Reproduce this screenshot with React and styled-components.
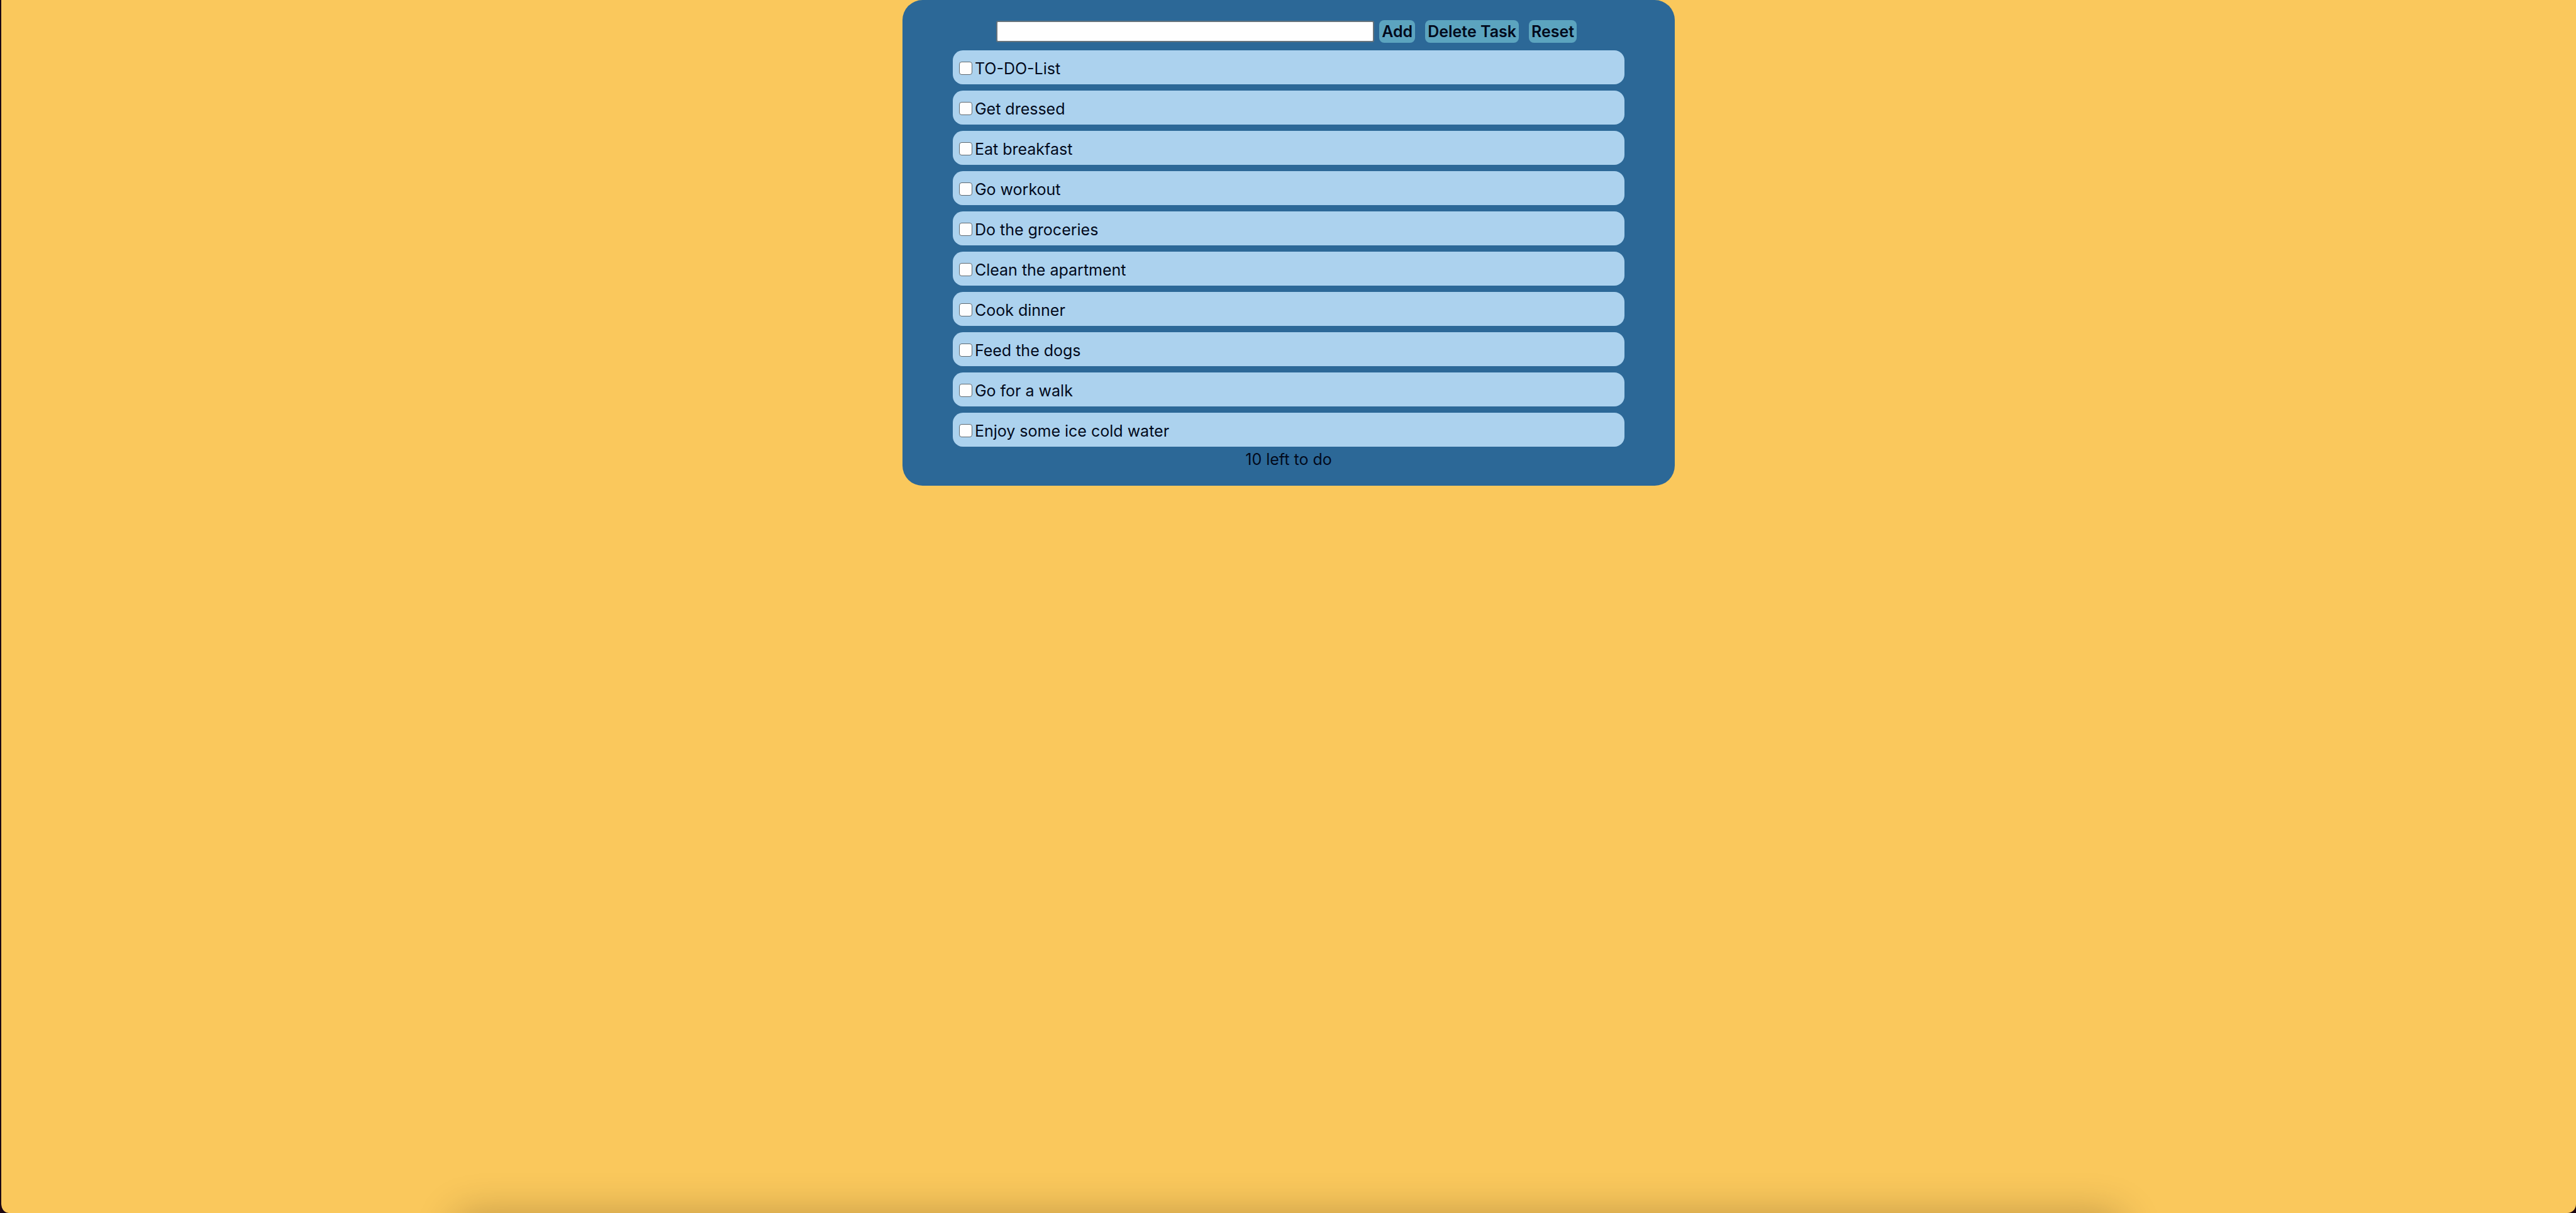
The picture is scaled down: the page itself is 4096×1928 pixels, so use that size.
import React, { useState } from "react";
import styled, { createGlobalStyle } from "styled-components";

const GlobalStyle = createGlobalStyle`
  * { box-sizing: border-box; }
  html, body { margin: 0; background: #1c0612; }
  body {
    font-family: Inter, "Liberation Sans", sans-serif;
    font-size: 25px;
    line-height: 32px;
    color: #020a1c;
  }
`;

const Page = styled.main`
  position: relative;
  display: flex;
  justify-content: center;
  align-items: flex-start;
  min-height: 100vh;
  border-left: 2px solid #1c0612;
  background: #fac85c;
  background-clip: padding-box;
  border-radius: 0 0 14px 14px;
  overflow: hidden;
`;

const DockShadow = styled.div`
  position: absolute;
  left: 17.6%;
  right: 17.6%;
  bottom: -200px;
  height: 200px;
  border-radius: 24px;
  box-shadow: 0 0 64px rgba(20, 10, 0, 0.24);
  pointer-events: none;
`;

const Card = styled.section`
  width: 30%;
  padding: 32px 80px 26px;
  border-radius: 32px;
  background: #2c6897;
`;

const Toolbar = styled.form`
  display: flex;
  align-items: center;
  gap: 16px;
  padding: 0 76px 0 69px;
  margin-bottom: 12px;
`;

const Entry = styled.div`
  display: flex;
  flex: 1;
  align-items: center;
  gap: 8px;
`;

const TaskInput = styled.input`
  flex: 1;
  min-width: 0;
  height: 34px;
  padding: 0 4px;
  border: 2px solid #66737c;
  border-radius: 3px;
  background: #fefefe;
  font: inherit;
`;

const Button = styled.button`
  height: 36px;
  padding: 0 4px;
  border: 0;
  border-radius: 8px;
  background: #5ca4bf;
  color: inherit;
  font: inherit;
  font-weight: 600;
  white-space: nowrap;
`;

const List = styled.ul`
  display: flex;
  flex-direction: column;
  gap: 10px;
  margin: 0;
  padding: 0;
  list-style: none;
`;

const Item = styled.li`
  height: 54px;
  border-radius: 16px;
  background: #acd2ee;
`;

const TaskLabel = styled.label`
  display: flex;
  align-items: center;
  gap: 4px;
  height: 100%;
  padding: 4px 10px 0;
`;

const Checkbox = styled.input`
  appearance: none;
  width: 21px;
  height: 21px;
  margin: 0 0 2px;
  border: 1px solid #5f6a72;
  border-radius: 4px;
  background: #fefefe;
  &:checked { background: #2c6897; }
`;

const Remaining = styled.p`
  margin: 4px 0 0;
  text-align: center;
`;

const TASKS = [
  "TO-DO-List",
  "Get dressed",
  "Eat breakfast",
  "Go workout",
  "Do the groceries",
  "Clean the apartment",
  "Cook dinner",
  "Feed the dogs",
  "Go for a walk",
  "Enjoy some ice cold water",
].map((text, id) => ({ id, text, done: false }));

export default function App() {
  const [tasks, setTasks] = useState(TASKS);
  const [draft, setDraft] = useState("");

  const add = (event) => {
    event.preventDefault();
    if (!draft.trim()) return;
    setTasks([...tasks, { id: Date.now(), text: draft, done: false }]);
    setDraft("");
  };
  const toggle = (id) =>
    setTasks(tasks.map((t) => (t.id === id ? { ...t, done: !t.done } : t)));

  return (
    <>
      <GlobalStyle />
      <Page>
        <Card>
          <Toolbar onSubmit={add}>
            <Entry>
              <TaskInput
                type="text"
                aria-label="New task"
                value={draft}
                onChange={(event) => setDraft(event.target.value)}
              />
              <Button type="submit">Add</Button>
            </Entry>
            <Button type="button" onClick={() => setTasks(tasks.filter((t) => !t.done))}>
              Delete Task
            </Button>
            <Button type="button" onClick={() => setTasks(TASKS)}>
              Reset
            </Button>
          </Toolbar>
          <List>
            {tasks.map((task) => (
              <Item key={task.id}>
                <TaskLabel>
                  <Checkbox
                    type="checkbox"
                    checked={task.done}
                    onChange={() => toggle(task.id)}
                  />
                  {task.text}
                </TaskLabel>
              </Item>
            ))}
          </List>
          <Remaining>{tasks.filter((t) => !t.done).length} left to do</Remaining>
        </Card>
        <DockShadow />
      </Page>
    </>
  );
}
